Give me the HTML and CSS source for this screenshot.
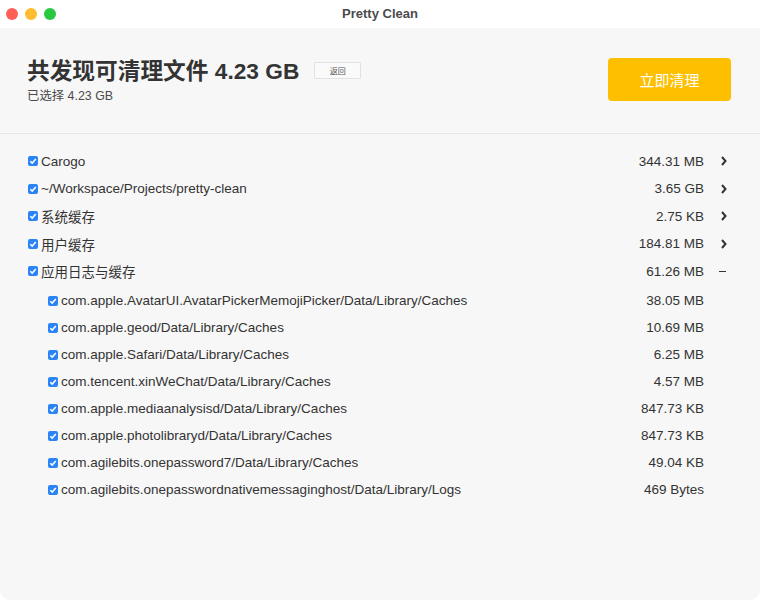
FILE: index.html
```html
<!DOCTYPE html>
<html lang="zh">
<head>
<meta charset="utf-8">
<title>Pretty Clean</title>
<link rel="stylesheet" href="styles.css">
</head>
<body>
<div class="window">
  <div class="titlebar">
    <div class="lights">
      <span class="light red"></span>
      <span class="light yellow"></span>
      <span class="light green"></span>
    </div>
    <div class="wtitle">Pretty Clean</div>
  </div>
  <div class="header">
    <div class="summary">
      <div class="headline">
        <h1>共发现可清理文件 4.23 GB</h1>
        <button class="back">返回</button>
      </div>
      <div class="selected">已选择 4.23 GB</div>
    </div>
    <button class="clean">立即清理</button>
  </div>
  <div class="list">
    <div class="row top">
      <svg class="cb" viewBox="0 0 10 10"><rect width="10" height="10" rx="2" fill="#2b84f6"/><path d="M2.3 5.2 L4.2 7.1 L7.8 2.9" fill="none" stroke="#fff" stroke-width="1.5"/></svg>
      <span class="label">Carogo</span><span class="size">344.31 MB</span>
      <span class="act"><svg class="chev" viewBox="0 0 6 10"><path d="M1 1 L4.5 5 L1 9" fill="none" stroke="#333" stroke-width="2"/></svg></span>
    </div>
    <div class="row top">
      <svg class="cb" viewBox="0 0 10 10"><rect width="10" height="10" rx="2" fill="#2b84f6"/><path d="M2.3 5.2 L4.2 7.1 L7.8 2.9" fill="none" stroke="#fff" stroke-width="1.5"/></svg>
      <span class="label">~/Workspace/Projects/pretty-clean</span><span class="size">3.65 GB</span>
      <span class="act"><svg class="chev" viewBox="0 0 6 10"><path d="M1 1 L4.5 5 L1 9" fill="none" stroke="#333" stroke-width="2"/></svg></span>
    </div>
    <div class="row top">
      <svg class="cb" viewBox="0 0 10 10"><rect width="10" height="10" rx="2" fill="#2b84f6"/><path d="M2.3 5.2 L4.2 7.1 L7.8 2.9" fill="none" stroke="#fff" stroke-width="1.5"/></svg>
      <span class="label">系统缓存</span><span class="size">2.75 KB</span>
      <span class="act"><svg class="chev" viewBox="0 0 6 10"><path d="M1 1 L4.5 5 L1 9" fill="none" stroke="#333" stroke-width="2"/></svg></span>
    </div>
    <div class="row top">
      <svg class="cb" viewBox="0 0 10 10"><rect width="10" height="10" rx="2" fill="#2b84f6"/><path d="M2.3 5.2 L4.2 7.1 L7.8 2.9" fill="none" stroke="#fff" stroke-width="1.5"/></svg>
      <span class="label">用户缓存</span><span class="size">184.81 MB</span>
      <span class="act"><svg class="chev" viewBox="0 0 6 10"><path d="M1 1 L4.5 5 L1 9" fill="none" stroke="#333" stroke-width="2"/></svg></span>
    </div>
    <div class="row top">
      <svg class="cb" viewBox="0 0 10 10"><rect width="10" height="10" rx="2" fill="#2b84f6"/><path d="M2.3 5.2 L4.2 7.1 L7.8 2.9" fill="none" stroke="#fff" stroke-width="1.5"/></svg>
      <span class="label">应用日志与缓存</span><span class="size">61.26 MB</span>
      <span class="act"><span class="minus"></span></span>
    </div>
    <div class="row sub">
      <svg class="cb" viewBox="0 0 10 10"><rect width="10" height="10" rx="2" fill="#2b84f6"/><path d="M2.3 5.2 L4.2 7.1 L7.8 2.9" fill="none" stroke="#fff" stroke-width="1.5"/></svg>
      <span class="label">com.apple.AvatarUI.AvatarPickerMemojiPicker/Data/Library/Caches</span><span class="size">38.05 MB</span><span class="act"></span>
    </div>
    <div class="row sub">
      <svg class="cb" viewBox="0 0 10 10"><rect width="10" height="10" rx="2" fill="#2b84f6"/><path d="M2.3 5.2 L4.2 7.1 L7.8 2.9" fill="none" stroke="#fff" stroke-width="1.5"/></svg>
      <span class="label">com.apple.geod/Data/Library/Caches</span><span class="size">10.69 MB</span><span class="act"></span>
    </div>
    <div class="row sub">
      <svg class="cb" viewBox="0 0 10 10"><rect width="10" height="10" rx="2" fill="#2b84f6"/><path d="M2.3 5.2 L4.2 7.1 L7.8 2.9" fill="none" stroke="#fff" stroke-width="1.5"/></svg>
      <span class="label">com.apple.Safari/Data/Library/Caches</span><span class="size">6.25 MB</span><span class="act"></span>
    </div>
    <div class="row sub">
      <svg class="cb" viewBox="0 0 10 10"><rect width="10" height="10" rx="2" fill="#2b84f6"/><path d="M2.3 5.2 L4.2 7.1 L7.8 2.9" fill="none" stroke="#fff" stroke-width="1.5"/></svg>
      <span class="label">com.tencent.xinWeChat/Data/Library/Caches</span><span class="size">4.57 MB</span><span class="act"></span>
    </div>
    <div class="row sub">
      <svg class="cb" viewBox="0 0 10 10"><rect width="10" height="10" rx="2" fill="#2b84f6"/><path d="M2.3 5.2 L4.2 7.1 L7.8 2.9" fill="none" stroke="#fff" stroke-width="1.5"/></svg>
      <span class="label">com.apple.mediaanalysisd/Data/Library/Caches</span><span class="size">847.73 KB</span><span class="act"></span>
    </div>
    <div class="row sub">
      <svg class="cb" viewBox="0 0 10 10"><rect width="10" height="10" rx="2" fill="#2b84f6"/><path d="M2.3 5.2 L4.2 7.1 L7.8 2.9" fill="none" stroke="#fff" stroke-width="1.5"/></svg>
      <span class="label">com.apple.photolibraryd/Data/Library/Caches</span><span class="size">847.73 KB</span><span class="act"></span>
    </div>
    <div class="row sub">
      <svg class="cb" viewBox="0 0 10 10"><rect width="10" height="10" rx="2" fill="#2b84f6"/><path d="M2.3 5.2 L4.2 7.1 L7.8 2.9" fill="none" stroke="#fff" stroke-width="1.5"/></svg>
      <span class="label">com.agilebits.onepassword7/Data/Library/Caches</span><span class="size">49.04 KB</span><span class="act"></span>
    </div>
    <div class="row sub">
      <svg class="cb" viewBox="0 0 10 10"><rect width="10" height="10" rx="2" fill="#2b84f6"/><path d="M2.3 5.2 L4.2 7.1 L7.8 2.9" fill="none" stroke="#fff" stroke-width="1.5"/></svg>
      <span class="label">com.agilebits.onepasswordnativemessaginghost/Data/Library/Logs</span><span class="size">469 Bytes</span><span class="act"></span>
    </div>
  </div>
</div>
</body>
</html>
```

FILE: styles.css
```css
* { box-sizing: border-box; }
html, body {
  margin: 0;
  padding: 0;
  background: #ffffff;
}
body {
  font-family: "Liberation Sans", "Noto Sans CJK SC", sans-serif;
  color: #333;
}
.window {
  width: 760px;
  height: 600px;
  background: #f7f7f7;
  border-radius: 0 0 10px 10px;
  overflow: hidden;
  display: flex;
  flex-direction: column;
}
.titlebar {
  height: 28px;
  background: #ffffff;
  display: flex;
  align-items: center;
  position: relative;
}
.lights {
  display: flex;
  gap: 7px;
  padding-left: 6px;
}
.light {
  width: 12px;
  height: 12px;
  border-radius: 50%;
  display: block;
}
.red { background: #fe5f57; }
.yellow { background: #febc2e; }
.green { background: #28c840; }
.wtitle {
  position: absolute;
  left: 0;
  right: 0;
  top: 0;
  line-height: 27px;
  text-align: center;
  font-weight: bold;
  font-size: 13px;
  color: #4b4b4b;
}
.header {
  height: 106px;
  border-bottom: 1px solid #e6e6ea;
  display: flex;
  justify-content: space-between;
  align-items: flex-start;
  padding: 29px 29px 0 27px;
}
.headline {
  display: flex;
  align-items: center;
}
h1 {
  margin: 0;
  font-size: 22.7px;
  line-height: 28px;
  font-weight: bold;
  color: #333;
}
.back {
  margin-left: 15px;
  margin-top: -2px;
  width: 47px;
  height: 17px;
  padding: 0;
  border: 1px solid #e2e2e2;
  background: #fafafa;
  font-family: "Noto Sans CJK SC", sans-serif;
  font-size: 8px;
  color: #555;
  border-radius: 1px;
}
.selected {
  margin-top: 3px;
  font-size: 12.4px;
  line-height: 16px;
  color: #4a4a4a;
}
.clean {
  margin-top: 1px;
  width: 123px;
  height: 43px;
  border: none;
  border-radius: 4px;
  background: #fdbf00;
  color: #fff;
  font-family: "Noto Sans CJK SC", sans-serif;
  font-size: 15px;
  padding: 0;
}
.list {
  padding: 13.5px 20px 0 28px;
}
.row {
  display: flex;
  align-items: center;
  font-size: 13.5px;
  color: #333;
}
.row.top { height: 27.5px; }
.row.sub { height: 27px; padding-left: 20px; }
.row.top + .row.sub { margin-top: 2px; }
.cb {
  width: 10px;
  height: 10px;
  flex: none;
  margin-right: 3px;
}
.label {
  flex: 1;
  white-space: nowrap;
}
.size {
  white-space: nowrap;
}
.act {
  width: 36px;
  flex: none;
  display: flex;
  justify-content: center;
  align-items: center;
}
.chev {
  width: 6px;
  height: 10px;
  margin-left: 3px;
}
.minus {
  width: 7px;
  height: 1.5px;
  background: #333;
  display: block;
  margin-left: 1px;
}
```
